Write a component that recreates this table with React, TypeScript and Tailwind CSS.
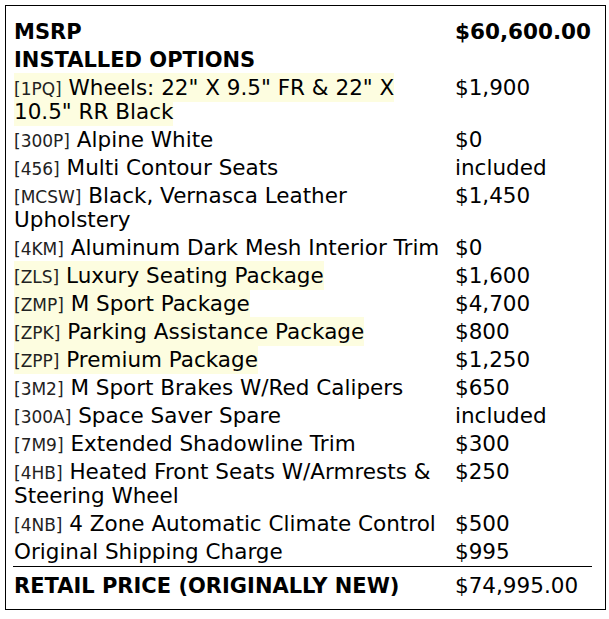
import React from "react";

type Item = { code?: string; label: string; price: string; hl?: boolean };

const items: Item[] = [
  { code: "1PQ", label: 'Wheels: 22" X 9.5" FR & 22" X 10.5" RR Black', price: "$1,900", hl: true },
  { code: "300P", label: "Alpine White", price: "$0" },
  { code: "456", label: "Multi Contour Seats", price: "included" },
  { code: "MCSW", label: "Black, Vernasca Leather Upholstery", price: "$1,450" },
  { code: "4KM", label: "Aluminum Dark Mesh Interior Trim", price: "$0" },
  { code: "ZLS", label: "Luxury Seating Package", price: "$1,600", hl: true },
  { code: "ZMP", label: "M Sport Package", price: "$4,700", hl: true },
  { code: "ZPK", label: "Parking Assistance Package", price: "$800", hl: true },
  { code: "ZPP", label: "Premium Package", price: "$1,250", hl: true },
  { code: "3M2", label: "M Sport Brakes W/Red Calipers", price: "$650" },
  { code: "300A", label: "Space Saver Spare", price: "included" },
  { code: "7M9", label: "Extended Shadowline Trim", price: "$300" },
  { code: "4HB", label: "Heated Front Seats W/Armrests & Steering Wheel", price: "$250" },
  { code: "4NB", label: "4 Zone Automatic Climate Control", price: "$500" },
  { label: "Original Shipping Charge", price: "$995" },
];

function Row({ item }: { item: Item }) {
  const content = (
    <>
      {item.code && (
        <span className="text-[17px] leading-none text-[#222]">[{item.code}]</span>
      )}
      {item.code ? " " : ""}
      {item.label}
    </>
  );
  return (
    <div className="grid grid-cols-[441px_138px] py-[2px]">
      <div className="px-[1px]">
        {item.hl ? (
          <span className="bg-[#fdfde0] py-[2px] [box-decoration-break:clone]">{content}</span>
        ) : (
          content
        )}
      </div>
      <div className="px-[1px]">{item.price}</div>
    </div>
  );
}

export default function App() {
  return (
    <div className="p-[5px] bg-white">
      <div className="w-[601px] h-[605px] border border-black pt-[12px] px-[7px] font-['DejaVu_Sans',sans-serif] text-[21.5px] leading-[24px] text-black">
        <div className="w-[579px]">
          <div className="grid grid-cols-[441px_138px] py-[2px] font-bold">
            <div className="px-[1px] text-[21px]">MSRP</div>
            <div className="px-[1px]">$60,600.00</div>
          </div>
          <div className="grid grid-cols-[441px_138px] py-[2px] font-bold">
            <div className="px-[1px] text-[21px]">INSTALLED OPTIONS</div>
            <div className="px-[1px]"></div>
          </div>
          {items.map((it, i) => (
            <Row key={i} item={it} />
          ))}
          <div className="border-t border-black" />
          <div className="grid grid-cols-[441px_138px] pt-[7px] pb-[2px]">
            <div className="px-[1px] font-bold text-[21px]">RETAIL PRICE (ORIGINALLY NEW)</div>
            <div className="px-[1px]">$74,995.00</div>
          </div>
        </div>
      </div>
    </div>
  );
}
